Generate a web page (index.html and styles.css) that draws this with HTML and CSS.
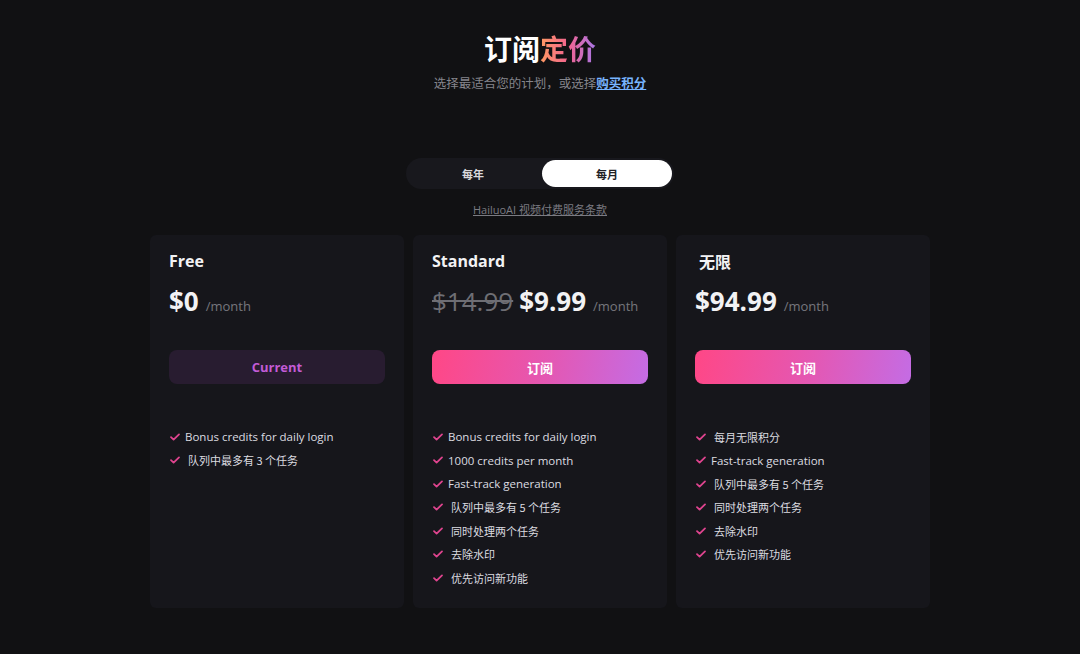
FILE: index.html
```html
<!DOCTYPE html>
<html lang="zh">
  <head>
    <meta charset="UTF-8" />
    <title>订阅定价</title>
    <link rel="stylesheet" href="styles.css">
  </head>
  <body>
    <div class="page">
      <header class="head">
        <h1 class="title">订阅<span class="grad">定价</span></h1>
        <p class="sub">选择最适合您的计划，或选择<a href="#" class="buy">购买积分</a></p>
      </header>

      <div class="toggle">
        <div class="tab">每年</div>
        <div class="tab active">每月</div>
      </div>
      <a href="#" class="terms">HailuoAI 视频付费服务条款</a>

      <div class="cards">
        <div class="card">
          <h2 class="name">Free</h2>
          <div class="price"><span class="amount">$0</span><span class="per">/month</span></div>
          <button class="btn current">Current</button>
          <ul class="features">
            <li><svg class="check" viewBox="0 0 12 12"><path d="M2 6.2l2.6 2.4L10 3.4"/></svg>Bonus credits for daily login</li>
            <li><svg class="check" viewBox="0 0 12 12"><path d="M2 6.2l2.6 2.4L10 3.4"/></svg><span class="cn">队列中最多有 3 个任务</span></li>
          </ul>
        </div>

        <div class="card">
          <h2 class="name">Standard</h2>
          <div class="price"><span class="old">$14.99</span><span class="amount">$9.99</span><span class="per">/month</span></div>
          <button class="btn buy-btn">订阅</button>
          <ul class="features">
            <li><svg class="check" viewBox="0 0 12 12"><path d="M2 6.2l2.6 2.4L10 3.4"/></svg>Bonus credits for daily login</li>
            <li><svg class="check" viewBox="0 0 12 12"><path d="M2 6.2l2.6 2.4L10 3.4"/></svg>1000 credits per month</li>
            <li><svg class="check" viewBox="0 0 12 12"><path d="M2 6.2l2.6 2.4L10 3.4"/></svg>Fast-track generation</li>
            <li><svg class="check" viewBox="0 0 12 12"><path d="M2 6.2l2.6 2.4L10 3.4"/></svg><span class="cn">队列中最多有 5 个任务</span></li>
            <li><svg class="check" viewBox="0 0 12 12"><path d="M2 6.2l2.6 2.4L10 3.4"/></svg><span class="cn">同时处理两个任务</span></li>
            <li><svg class="check" viewBox="0 0 12 12"><path d="M2 6.2l2.6 2.4L10 3.4"/></svg><span class="cn">去除水印</span></li>
            <li><svg class="check" viewBox="0 0 12 12"><path d="M2 6.2l2.6 2.4L10 3.4"/></svg><span class="cn">优先访问新功能</span></li>
          </ul>
        </div>

        <div class="card">
          <h2 class="name name-cn">无限</h2>
          <div class="price"><span class="amount">$94.99</span><span class="per">/month</span></div>
          <button class="btn buy-btn">订阅</button>
          <ul class="features">
            <li><svg class="check" viewBox="0 0 12 12"><path d="M2 6.2l2.6 2.4L10 3.4"/></svg><span class="cn">每月无限积分</span></li>
            <li><svg class="check" viewBox="0 0 12 12"><path d="M2 6.2l2.6 2.4L10 3.4"/></svg>Fast-track generation</li>
            <li><svg class="check" viewBox="0 0 12 12"><path d="M2 6.2l2.6 2.4L10 3.4"/></svg><span class="cn">队列中最多有 5 个任务</span></li>
            <li><svg class="check" viewBox="0 0 12 12"><path d="M2 6.2l2.6 2.4L10 3.4"/></svg><span class="cn">同时处理两个任务</span></li>
            <li><svg class="check" viewBox="0 0 12 12"><path d="M2 6.2l2.6 2.4L10 3.4"/></svg><span class="cn">去除水印</span></li>
            <li><svg class="check" viewBox="0 0 12 12"><path d="M2 6.2l2.6 2.4L10 3.4"/></svg><span class="cn">优先访问新功能</span></li>
          </ul>
        </div>
      </div>
    </div>
  </body>
</html>
```

FILE: styles.css
```css
* {
  margin: 0;
  padding: 0;
  box-sizing: border-box;
}

body {
  height: 100vh;
  overflow: hidden;
  background: #111113;
  color: #ededf0;
  font-family: "Open Sans", "Noto Sans CJK SC", sans-serif;
}

.page {
  display: flex;
  flex-direction: column;
  align-items: center;
  padding-top: 29px;
}

.head {
  text-align: center;
}

.title {
  font-size: 28px;
  font-weight: 700;
  line-height: 38px;
  color: #ffffff;
  font-family: "Noto Sans CJK SC", sans-serif;
}

.grad {
  background: linear-gradient(90deg, #ff9a62 0%, #f2648f 50%, #a876e8 100%);
  -webkit-background-clip: text;
  background-clip: text;
  color: transparent;
}

.sub {
  margin-top: 7px;
  font-size: 12.5px;
  line-height: 18px;
  color: #85858c;
  font-family: "Noto Sans CJK SC", sans-serif;
}

.buy {
  color: #78b4ff;
  font-weight: 700;
  text-decoration: underline;
}

.toggle {
  margin-top: 66px;
  width: 268px;
  height: 31px;
  padding: 2px;
  border-radius: 16px;
  background: #18181d;
  display: flex;
  justify-content: space-between;
}

.tab {
  width: 130px;
  height: 27px;
  border-radius: 14px;
  display: flex;
  align-items: center;
  justify-content: center;
  font-size: 11px;
  font-weight: 700;
  color: #d8d8dc;
  font-family: "Noto Sans CJK SC", sans-serif;
}

.tab.active {
  background: #ffffff;
  color: #222226;
}

.terms {
  margin-top: 13px;
  font-size: 11px;
  line-height: 16px;
  color: #7b7b82;
  text-decoration: underline;
  font-family: "Open Sans", "Noto Sans CJK SC", sans-serif;
}

.cards {
  margin-top: 17px;
  display: flex;
  gap: 9px;
}

.card {
  width: 254px;
  height: 373px;
  background: #16161b;
  border-radius: 6px;
  padding: 16px 19px;
}

.name {
  font-size: 16px;
  font-weight: 700;
  line-height: 20px;
  color: #f2f2f4;
}

.name-cn {
  padding-left: 4px;
  font-family: "Noto Sans CJK SC", sans-serif;
}

.price {
  margin-top: 12px;
  display: flex;
  align-items: baseline;
  height: 32px;
}

.amount {
  font-size: 26px;
  font-weight: 700;
  color: #f2f2f4;
}

.old {
  font-size: 26px;
  color: #6e6e74;
  text-decoration: line-through;
  margin-right: 6px;
}

.per {
  font-size: 13px;
  color: #76767d;
  margin-left: 7px;
}

.btn {
  display: block;
  margin-top: 35px;
  width: 216px;
  height: 34px;
  border: none;
  border-radius: 8px;
  font-size: 13px;
  font-weight: 700;
  font-family: "Open Sans", "Noto Sans CJK SC", sans-serif;
  cursor: pointer;
}

.current {
  background: #281c30;
  color: #c35bd6;
}

.buy-btn {
  background: linear-gradient(100deg, #ff4786 0%, #e358b4 55%, #c46ce4 100%);
  color: #ffffff;
}

.features {
  list-style: none;
  margin-top: 41px;
}

.features li {
  display: flex;
  align-items: center;
  height: 23.5px;
  font-size: 11.5px;
  color: #dcdce0;
}

.cn {
  margin-left: 3px;
  font-family: "Noto Sans CJK SC", sans-serif;
  font-size: 11px;
}

.check {
  width: 12px;
  height: 12px;
  margin-right: 4px;
  fill: none;
  stroke: #e0448f;
  stroke-width: 1.8;
  stroke-linecap: round;
  stroke-linejoin: round;
}
```
